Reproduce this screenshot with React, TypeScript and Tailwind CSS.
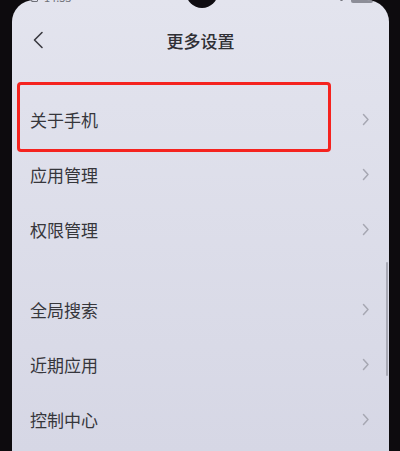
import { ReactNode } from "react";

const groups = [
  ["关于手机", "应用管理", "权限管理"],
  ["全局搜索", "近期应用", "控制中心"],
];

const font = {
  fontFamily: '"Noto Sans CJK SC", "Noto Sans", sans-serif',
};

function Chevron() {
  return (
    <svg width="8" height="13" viewBox="0 0 8 13" fill="none">
      <path
        d="M1.5 1.5 L6 6.5 L1.5 11.5"
        stroke="#a7a8b3"
        strokeWidth="1.5"
        strokeLinecap="round"
        strokeLinejoin="round"
      />
    </svg>
  );
}

function Row({ label, children }: { label: string; children?: ReactNode }) {
  return (
    <div className="relative flex h-[55px] items-center justify-between pl-[18px] pr-[19px]">
      <span className="text-[17px] leading-none text-[#36363b]">{label}</span>
      <Chevron />
      {children}
    </div>
  );
}

export default function App() {
  return (
    <div className="flex h-[451px] w-[400px] overflow-hidden bg-[#0d0b0e]" style={font}>
      <div className="relative ml-[12px] w-[377px] overflow-hidden rounded-t-[22px] bg-gradient-to-b from-[#e3e4ee] to-[#d6d7e5]">
        {/* notch */}
        <div className="absolute left-[174px] top-[-24px] h-[32px] w-[32px] rounded-full bg-[#0f0d12]" />

        {/* status bar, mostly cut off at the top */}
        <div className="-mt-[8px] flex h-[26px] items-start justify-between pl-[19px] pr-[16px]">
          <div className="flex items-center gap-[6px] text-[11px] leading-[11px] text-[#6f7078]">
            <span className="h-[8px] w-[7px] rounded-[1px] border border-[#6f7078]" />
            <span>14:53</span>
          </div>
          <div className="flex items-center gap-[8px] pt-[3px]">
            <span className="h-[3px] w-[3px] rounded-full bg-[#6f7078]" />
            <span className="h-[8px] w-[22px] rounded-[2px] bg-[#8d8e98]" />
          </div>
        </div>

        {/* nav bar */}
        <div className="relative -mt-[2px] flex h-[48px] items-center justify-center">
          <svg
            className="absolute left-[20px]"
            width="12"
            height="18"
            viewBox="0 0 12 18"
            fill="none"
          >
            <path
              d="M10 1.5 L2.5 9 L10 16.5"
              stroke="#3a3a40"
              strokeWidth="1.6"
              strokeLinecap="round"
              strokeLinejoin="round"
            />
          </svg>
          <span className="text-[17px] font-medium leading-none text-[#2f2f34]">更多设置</span>
        </div>

        <div className="mt-[28px] flex flex-col gap-[25px]">
          {groups.map((items, gi) => (
            <div key={gi}>
              {items.map((label, i) => (
                <Row key={label} label={label}>
                  {gi === 0 && i === 0 && (
                    <div className="absolute left-[5px] top-[-10px] h-[70px] w-[314px] rounded-[4px] border-[3px] border-[#f5231f]" />
                  )}
                </Row>
              ))}
            </div>
          ))}
        </div>

        {/* scrollbar */}
        <div className="absolute right-[1px] top-[262px] h-[114px] w-[2px] rounded-full bg-[#a9aab6]" />
      </div>
    </div>
  );
}
